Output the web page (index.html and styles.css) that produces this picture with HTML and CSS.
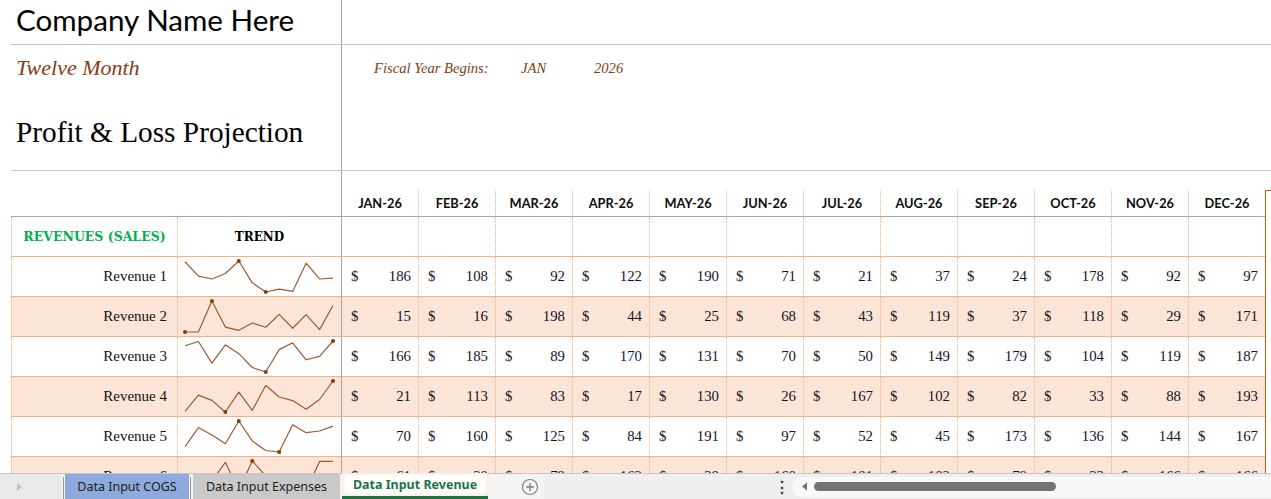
FILE: index.html
```html
<!DOCTYPE html>
<html lang="en">
<head>
<meta charset="utf-8">
<title>Twelve Month Profit &amp; Loss Projection</title>
<link rel="stylesheet" href="styles.css">
</head>
<body>
<div class="sheet">
  <div class="hdr">
    <div class="hdr-row hdr-row--title">
      <div class="hdr-left"><span class="company">Company Name Here</span></div>
      <div class="hdr-right"></div>
    </div>
    <div class="hdr-row hdr-row--sub">
      <div class="hdr-left">
        <div class="twelve">Twelve Month</div>
        <div class="pl-title">Profit &amp; Loss Projection</div>
      </div>
      <div class="hdr-right fiscal">
        <span class="fiscal-label">Fiscal Year Begins:</span><span class="fiscal-month">JAN</span><span class="fiscal-year">2026</span>
      </div>
    </div>
  </div>

  <div class="grid">
    <div class="sp-left"></div><div class="sp-right"></div>

    <div class="mh-left"></div>
    <div class="mh mh--first">JAN-26</div>
    <div class="mh">FEB-26</div>
    <div class="mh">MAR-26</div>
    <div class="mh">APR-26</div>
    <div class="mh">MAY-26</div>
    <div class="mh">JUN-26</div>
    <div class="mh">JUL-26</div>
    <div class="mh">AUG-26</div>
    <div class="mh">SEP-26</div>
    <div class="mh">OCT-26</div>
    <div class="mh">NOV-26</div>
    <div class="mh">DEC-26</div>
    <div class="tot tot--head"></div>

    <div class="row">
      <div class="c-label c-section">REVENUES (SALES)</div>
      <div class="c-trend c-trend-head">TREND</div>
      <div class="c-val c-val--first"></div><div class="c-val"></div><div class="c-val"></div><div class="c-val"></div><div class="c-val"></div><div class="c-val"></div><div class="c-val"></div><div class="c-val"></div><div class="c-val"></div><div class="c-val"></div><div class="c-val"></div><div class="c-val"></div>
      <div class="tot"></div>
    </div>

    <div class="row">
      <div class="c-label">Revenue 1</div>
      <div class="c-trend"><svg class="spark" viewBox="0 0 163 39" width="163" height="39"><polyline points="7,4.73 20.45,19.04 33.91,21.98 47.36,16.47 60.82,4 74.27,25.83 87.73,35 101.18,32.06 114.64,34.45 128.09,6.2 141.55,21.98 155,21.06"/><circle cx="60.82" cy="4" r="2"/><circle cx="87.73" cy="35" r="2"/></svg></div>
      <div class="c-val c-val--first"><span>$</span><span>186</span></div>
      <div class="c-val"><span>$</span><span>108</span></div>
      <div class="c-val"><span>$</span><span>92</span></div>
      <div class="c-val"><span>$</span><span>122</span></div>
      <div class="c-val"><span>$</span><span>190</span></div>
      <div class="c-val"><span>$</span><span>71</span></div>
      <div class="c-val"><span>$</span><span>21</span></div>
      <div class="c-val"><span>$</span><span>37</span></div>
      <div class="c-val"><span>$</span><span>24</span></div>
      <div class="c-val"><span>$</span><span>178</span></div>
      <div class="c-val"><span>$</span><span>92</span></div>
      <div class="c-val"><span>$</span><span>97</span></div>
      <div class="tot"></div>
    </div>

    <div class="row row--alt">
      <div class="c-label">Revenue 2</div>
      <div class="c-trend"><svg class="spark" viewBox="0 0 163 39" width="163" height="39"><polyline points="7,35 20.45,34.83 33.91,4 47.36,30.09 60.82,33.31 74.27,26.02 87.73,30.26 101.18,17.38 114.64,31.27 128.09,17.55 141.55,32.63 155,8.57"/><circle cx="7" cy="35" r="2"/><circle cx="33.91" cy="4" r="2"/></svg></div>
      <div class="c-val c-val--first"><span>$</span><span>15</span></div>
      <div class="c-val"><span>$</span><span>16</span></div>
      <div class="c-val"><span>$</span><span>198</span></div>
      <div class="c-val"><span>$</span><span>44</span></div>
      <div class="c-val"><span>$</span><span>25</span></div>
      <div class="c-val"><span>$</span><span>68</span></div>
      <div class="c-val"><span>$</span><span>43</span></div>
      <div class="c-val"><span>$</span><span>119</span></div>
      <div class="c-val"><span>$</span><span>37</span></div>
      <div class="c-val"><span>$</span><span>118</span></div>
      <div class="c-val"><span>$</span><span>29</span></div>
      <div class="c-val"><span>$</span><span>171</span></div>
      <div class="tot"></div>
    </div>

    <div class="row">
      <div class="c-label">Revenue 3</div>
      <div class="c-trend"><svg class="spark" viewBox="0 0 163 39" width="163" height="39"><polyline points="7,8.75 20.45,4.45 33.91,26.18 47.36,7.85 60.82,16.67 74.27,30.48 87.73,35 101.18,12.6 114.64,5.81 128.09,22.78 141.55,19.39 155,4"/><circle cx="87.73" cy="35" r="2"/><circle cx="155" cy="4" r="2"/></svg></div>
      <div class="c-val c-val--first"><span>$</span><span>166</span></div>
      <div class="c-val"><span>$</span><span>185</span></div>
      <div class="c-val"><span>$</span><span>89</span></div>
      <div class="c-val"><span>$</span><span>170</span></div>
      <div class="c-val"><span>$</span><span>131</span></div>
      <div class="c-val"><span>$</span><span>70</span></div>
      <div class="c-val"><span>$</span><span>50</span></div>
      <div class="c-val"><span>$</span><span>149</span></div>
      <div class="c-val"><span>$</span><span>179</span></div>
      <div class="c-val"><span>$</span><span>104</span></div>
      <div class="c-val"><span>$</span><span>119</span></div>
      <div class="c-val"><span>$</span><span>187</span></div>
      <div class="tot"></div>
    </div>

    <div class="row row--alt">
      <div class="c-label">Revenue 4</div>
      <div class="c-trend"><svg class="spark" viewBox="0 0 163 39" width="163" height="39"><polyline points="7,34.3 20.45,18.09 33.91,23.38 47.36,35 60.82,15.1 74.27,33.42 87.73,8.58 101.18,20.03 114.64,23.55 128.09,32.18 141.55,22.49 155,4"/><circle cx="47.36" cy="35" r="2"/><circle cx="155" cy="4" r="2"/></svg></div>
      <div class="c-val c-val--first"><span>$</span><span>21</span></div>
      <div class="c-val"><span>$</span><span>113</span></div>
      <div class="c-val"><span>$</span><span>83</span></div>
      <div class="c-val"><span>$</span><span>17</span></div>
      <div class="c-val"><span>$</span><span>130</span></div>
      <div class="c-val"><span>$</span><span>26</span></div>
      <div class="c-val"><span>$</span><span>167</span></div>
      <div class="c-val"><span>$</span><span>102</span></div>
      <div class="c-val"><span>$</span><span>82</span></div>
      <div class="c-val"><span>$</span><span>33</span></div>
      <div class="c-val"><span>$</span><span>88</span></div>
      <div class="c-val"><span>$</span><span>193</span></div>
      <div class="tot"></div>
    </div>

    <div class="row">
      <div class="c-label">Revenue 5</div>
      <div class="c-trend"><svg class="spark" viewBox="0 0 163 39" width="163" height="39"><polyline points="7,29.69 20.45,10.58 33.91,18.01 47.36,26.72 60.82,4 74.27,23.96 87.73,33.51 101.18,35 114.64,7.82 128.09,15.68 141.55,13.98 155,9.1"/><circle cx="60.82" cy="4" r="2"/><circle cx="101.18" cy="35" r="2"/></svg></div>
      <div class="c-val c-val--first"><span>$</span><span>70</span></div>
      <div class="c-val"><span>$</span><span>160</span></div>
      <div class="c-val"><span>$</span><span>125</span></div>
      <div class="c-val"><span>$</span><span>84</span></div>
      <div class="c-val"><span>$</span><span>191</span></div>
      <div class="c-val"><span>$</span><span>97</span></div>
      <div class="c-val"><span>$</span><span>52</span></div>
      <div class="c-val"><span>$</span><span>45</span></div>
      <div class="c-val"><span>$</span><span>173</span></div>
      <div class="c-val"><span>$</span><span>136</span></div>
      <div class="c-val"><span>$</span><span>144</span></div>
      <div class="c-val"><span>$</span><span>167</span></div>
      <div class="tot"></div>
    </div>

    <div class="row row--alt">
      <div class="c-label">Revenue 6</div>
      <div class="c-trend"><svg class="spark" viewBox="0 0 163 39" width="163" height="39"><polyline points="7,28.04 20.45,35 33.91,23.99 47.36,5.35 60.82,33.2 74.27,4 87.73,19.05 101.18,18.83 114.64,23.99 128.09,34.33 141.55,4.45 155,4.45"/><circle cx="20.45" cy="35" r="2"/><circle cx="74.27" cy="4" r="2"/></svg></div>
      <div class="c-val c-val--first"><span>$</span><span>61</span></div>
      <div class="c-val"><span>$</span><span>30</span></div>
      <div class="c-val"><span>$</span><span>79</span></div>
      <div class="c-val"><span>$</span><span>162</span></div>
      <div class="c-val"><span>$</span><span>38</span></div>
      <div class="c-val"><span>$</span><span>168</span></div>
      <div class="c-val"><span>$</span><span>101</span></div>
      <div class="c-val"><span>$</span><span>102</span></div>
      <div class="c-val"><span>$</span><span>79</span></div>
      <div class="c-val"><span>$</span><span>33</span></div>
      <div class="c-val"><span>$</span><span>166</span></div>
      <div class="c-val"><span>$</span><span>166</span></div>
      <div class="tot"></div>
    </div>
  </div>
</div>

<div class="tabbar">
  <div class="tab-nav"><svg width="8" height="10" viewBox="0 0 8 10"><polygon points="2,1 7,5 2,9" /></svg></div>
  <div class="tab-sep"></div>
  <div class="tab tab--cogs">Data Input COGS</div>
  <div class="tab-sep"></div>
  <div class="tab tab--exp">Data Input Expenses</div>
  <div class="tab tab--active">Data Input Revenue</div>
  <div class="tab-add"><svg width="18" height="18" viewBox="0 0 18 18"><circle cx="9" cy="9" r="7.5"/><path d="M9 5v8M5 9h8"/></svg></div>
  <div class="tab-rest">
    <div class="tab-more">&#8942;</div>
    <div class="hscroll">
      <svg class="hscroll-arrow" width="7" height="9" viewBox="0 0 7 9"><polygon points="6,0.5 1,4.5 6,8.5"/></svg>
      <div class="hscroll-thumb"></div>
    </div>
  </div>
</div>
</body>
</html>
```

FILE: styles.css
```css
* { box-sizing: border-box; }
html, body { margin: 0; padding: 0; }
body {
  width: 1271px;
  height: 499px;
  overflow: hidden;
  background: #fff;
  color: #111;
  font-family: "Liberation Serif", serif;
}

.sheet {
  height: 473px;
  overflow: hidden;
}

/* ---------- header block ---------- */
.hdr { padding-left: 11px; }
.hdr-row {
  display: flex;
  border-bottom: 1px solid #c4c4c4;
}
.hdr-row--title { height: 45px; }
.hdr-row--sub { height: 126px; }
.hdr-left {
  width: 330px;
  flex: none;
  padding-left: 5px;
  white-space: nowrap;
}
.hdr-right {
  flex: 1;
  border-left: 1px solid #a6a6a6;
}
.company {
  display: block;
  font-family: "Lato", sans-serif;
  font-size: 29.6px;
  line-height: 40px;
  color: #000;
}
.twelve {
  margin-top: 11px;
  height: 24px;
  line-height: 24px;
  font-size: 22px;
  font-style: italic;
  color: #843c0c;
}
.pl-title {
  margin-top: 35px;
  line-height: 34px;
  font-size: 29.3px;
  color: #000;
}
.fiscal {
  display: flex;
  padding-top: 15px;
  font-style: italic;
  font-size: 14.6px;
  line-height: 16px;
  color: #843c0c;
  white-space: nowrap;
}
.fiscal-label { margin-left: 32px; width: 147px; }
.fiscal-month { width: 73px; }

/* ---------- grid ---------- */
.grid {
  display: grid;
  padding-left: 11px;
  grid-template-columns: 166px 164px repeat(12, 77px) 1fr;
  grid-template-rows: 19px 27px;
  grid-auto-rows: 40px;
}
.row { display: contents; }

.sp-left { grid-column: 1 / 3; }
.sp-right { grid-column: 3 / -1; border-left: 1px solid #a6a6a6; }

.mh-left {
  grid-column: 1 / 3;
  border-bottom: 1px solid #a6a6a6;
}
.mh {
  border-left: 1px dotted #f4b183;
  border-bottom: 1px solid #a6a6a6;
  font-family: "Lato", sans-serif;
  font-weight: 700;
  font-size: 12.8px;
  line-height: 27px;
  text-align: center;
  color: #0d0d0d;
}
.mh--first { border-left: 1px solid #a6a6a6; }

.tot {
  border-left: 1px solid #c55a11;
}
.tot--head {
  border-top: 1px solid #c55a11;
}

.c-label, .c-trend, .c-val {
  border-bottom: 1px solid #f4b183;
  border-left: 1px dotted #f4b183;
}
.row--alt .c-label,
.row--alt .c-trend,
.row--alt .c-val { background: #fce4d6; }

.c-label {
  display: flex;
  align-items: center;
  justify-content: flex-end;
  padding-right: 10px;
  font-size: 15px;
  color: #111;
}
.c-section {
  justify-content: center;
  padding-right: 0;
  font-family: "DejaVu Serif", serif;
  font-weight: 700;
  font-size: 12.5px;
  color: #00b050;
}
.c-trend-head {
  display: flex;
  align-items: center;
  justify-content: center;
  font-family: "DejaVu Serif", serif;
  font-weight: 700;
  font-size: 12px;
  color: #000;
}
.spark { display: block; }
.spark polyline {
  fill: none;
  stroke: #9e5a2e;
  stroke-width: 1.2;
  stroke-linejoin: round;
}
.spark circle { fill: #843c0c; }

.c-val {
  display: flex;
  align-items: center;
  justify-content: space-between;
  padding: 0 7px 0 9px;
  font-size: 14.8px;
  color: #14142b;
}
.c-val--first { border-left: 1px solid #a6a6a6; }

/* ---------- sheet tabs ---------- */
.tabbar {
  display: flex;
  height: 26px;
  border-top: 1px solid #c6c6c6;
  background: #f3f3f3;
  font-family: "Noto Sans", sans-serif;
  font-size: 12.5px;
  color: #222;
}
.tab-nav {
  width: 62px;
  display: flex;
  align-items: center;
  justify-content: center;
  padding-right: 24px;
  background: #e9e9e9;
}
.tab-nav polygon { fill: #c4c4c4; }
.tab-sep {
  width: 1px;
  margin: 3px 1px 0;
  background: #9a9a9a;
}
.tab {
  display: flex;
  align-items: center;
  justify-content: center;
  height: 25px;
}
.tab--cogs { width: 124px; background: #8ea9db; }
.tab--exp { width: 147px; background: #c9c9c9; margin-left: 1px; }
.tab--active {
  width: 146px;
  margin-left: 2px;
  margin-top: -1px;
  height: 26px;
  background: #fff;
  box-shadow: inset 0 0 4px #f8d5be;
  border-bottom: 3px solid #217346;
  color: #217346;
  font-weight: 700;
}
.tab-add {
  width: 56px;
  display: flex;
  align-items: center;
  justify-content: center;
  padding-left: 28px;
}
.tab-add circle { fill: none; stroke: #808080; stroke-width: 1.2; }
.tab-add path { stroke: #808080; stroke-width: 1.4; fill: none; }
.tab-rest {
  flex: 1;
  display: flex;
  align-items: center;
  background: #efefef;
  padding-left: 230px;
}
.tab-more {
  width: 18px;
  font-size: 16px;
  line-height: 16px;
  color: #444;
  font-weight: 700;
}
.hscroll {
  flex: 1;
  height: 20px;
  display: flex;
  align-items: center;
  gap: 6px;
  padding-left: 9px;
  border-radius: 10px 0 0 10px;
  background: #f8f8f8;
}
.hscroll-arrow polygon { fill: #707070; }
.hscroll-thumb {
  width: 242px;
  height: 9px;
  border-radius: 5px;
  background: #737373;
}
```
